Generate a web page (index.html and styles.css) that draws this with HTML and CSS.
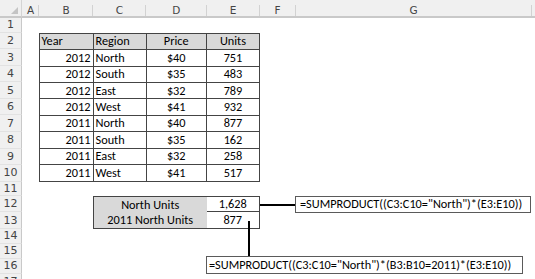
FILE: index.html
```html
<!DOCTYPE html>
<html>
<head>
<meta charset="utf-8">
<link rel="stylesheet" href="styles.css">
</head>
<body>
<div class="sheet">
  <div class="corner"><span class="tri"></span></div>
  <div class="colhdr">A</div>
  <div class="colhdr">B</div>
  <div class="colhdr">C</div>
  <div class="colhdr">D</div>
  <div class="colhdr">E</div>
  <div class="colhdr">F</div>
  <div class="colhdr">G</div>
  <div class="colhdr last"></div>

  <div class="rowhdr r1">1</div>
  <div class="rowhdr r2">2</div>
  <div class="rowhdr r3">3</div>
  <div class="rowhdr r4">4</div>
  <div class="rowhdr r5">5</div>
  <div class="rowhdr r6">6</div>
  <div class="rowhdr r7">7</div>
  <div class="rowhdr r8">8</div>
  <div class="rowhdr r9">9</div>
  <div class="rowhdr r10">10</div>
  <div class="rowhdr r11">11</div>
  <div class="rowhdr r12">12</div>
  <div class="rowhdr r13">13</div>
  <div class="rowhdr r14">14</div>
  <div class="rowhdr r15">15</div>
  <div class="rowhdr r16">16</div>
  <div class="rowhdr r17">17</div>

  <div class="data">
    <div class="c th left">Year</div><div class="c th left">Region</div><div class="c th center">Price</div><div class="c th center">Units</div>
    <div class="c right">2012</div><div class="c left">North</div><div class="c center">$40</div><div class="c center">751</div>
    <div class="c right">2012</div><div class="c left">South</div><div class="c center">$35</div><div class="c center">483</div>
    <div class="c right">2012</div><div class="c left">East</div><div class="c center">$32</div><div class="c center">789</div>
    <div class="c right">2012</div><div class="c left">West</div><div class="c center">$41</div><div class="c center">932</div>
    <div class="c right">2011</div><div class="c left">North</div><div class="c center">$40</div><div class="c center">877</div>
    <div class="c right">2011</div><div class="c left">South</div><div class="c center">$35</div><div class="c center">162</div>
    <div class="c right">2011</div><div class="c left">East</div><div class="c center">$32</div><div class="c center">258</div>
    <div class="c right">2011</div><div class="c left">West</div><div class="c center">$41</div><div class="c center">517</div>
  </div>

  <div class="summary">
    <div class="lbl">North Units</div><div class="val top">1,628</div>
    <div class="lbl">2011 North Units</div><div class="val">877</div>
  </div>

  <div class="hline"></div>
  <div class="vline"></div>
  <div class="fbox fbox-top">=SUMPRODUCT((C3:C10="North")*(E3:E10))</div>
  <div class="fbox fbox-bottom">=SUMPRODUCT((C3:C10="North")*(B3:B10=2011)*(E3:E10))</div>
</div>
</body>
</html>
```
FILE: styles.css
```css
html, body {
  margin: 0;
  padding: 0;
  background: #ffffff;
}
.sheet {
  position: relative;
  width: 535px;
  height: 279px;
  overflow: hidden;
  display: grid;
  grid-template-columns: 22px 17px 54px 53px 60.5px 53px 36px 236px 1fr;
  grid-template-rows: 18px 14.7px repeat(9, 16.56px) 14.3px 16.5px 16.5px 15px 15px 15px 15px;
  font-family: Calibri, Carlito, "Liberation Sans", Arial, sans-serif;
  color: #000;
}
.corner {
  grid-column: 1;
  grid-row: 1;
  background: #f0f0f0;
  border-bottom: 2px solid #c9c9c9;
  border-right: 1px solid #d4d4d4;
  box-sizing: border-box;
  position: relative;
}
.tri {
  position: absolute;
  right: 3px;
  bottom: 2px;
  width: 0;
  height: 0;
  border-left: 7px solid transparent;
  border-bottom: 7px solid #c4c4c4;
}
.colhdr {
  grid-row: 1;
  background: #f0f0f0;
  border-bottom: 2px solid #c9c9c9;
  box-sizing: border-box;
  display: flex;
  align-items: center;
  justify-content: center;
  font-family: "DejaVu Sans", "Liberation Sans", sans-serif;
  font-size: 10.5px;
  color: #444;
  padding-top: 3px;
  position: relative;
}
.colhdr::after {
  content: "";
  position: absolute;
  right: 0;
  top: 5px;
  bottom: 0;
  width: 1px;
  background: #d2d2d2;
}
.colhdr.last::after { display: none; }
.rowhdr {
  grid-column: 1;
  background: #f0f0f0;
  border-right: 1px solid #c9c9c9;
  border-bottom: 1px solid #e2e2e2;
  box-sizing: border-box;
  display: flex;
  align-items: center;
  justify-content: center;
  font-family: "DejaVu Sans", "Liberation Sans", sans-serif;
  font-size: 11px;
  color: #444;
}
.r1 { grid-row: 2; } .r2 { grid-row: 3; } .r3 { grid-row: 4; } .r4 { grid-row: 5; }
.r5 { grid-row: 6; } .r6 { grid-row: 7; } .r7 { grid-row: 8; } .r8 { grid-row: 9; }
.r9 { grid-row: 10; } .r10 { grid-row: 11; } .r11 { grid-row: 12; } .r12 { grid-row: 13; }
.r13 { grid-row: 14; } .r14 { grid-row: 15; } .r15 { grid-row: 16; } .r16 { grid-row: 17; }
.r17 { grid-row: 18; align-items: flex-start; padding-top: 1px; }

.data {
  grid-column: 3 / 7;
  grid-row: 3 / 12;
  display: grid;
  grid-template-columns: 54px 53px 60.5px 53px;
  grid-template-rows: repeat(9, 1fr);
  border-top: 1px solid #444;
  border-left: 1px solid #444;
  margin-left: -0.5px;
  box-sizing: border-box;
  font-size: 12.3px;
}
.c {
  border-right: 1px solid #444;
  border-bottom: 1px solid #444;
  display: flex;
  align-items: center;
  padding: 0 2px;
  white-space: nowrap;
  overflow: hidden;
  line-height: 1;
}
.th { background: #d9d9d9; }
.left { justify-content: flex-start; }
.right { justify-content: flex-end; }
.center { justify-content: center; }

.summary {
  grid-column: 4 / 7;
  grid-row: 13 / 15;
  display: grid;
  grid-template-columns: 113.5px 1fr;
  grid-template-rows: 1fr 1fr;
  border: 1px solid #444;
  margin-left: -0.5px;
  box-sizing: border-box;
  font-size: 12.3px;
}
.lbl {
  background: #d9d9d9;
  display: flex;
  align-items: center;
  justify-content: center;
  white-space: nowrap;
  line-height: 1;
}
.val {
  display: flex;
  align-items: center;
  justify-content: center;
  line-height: 1;
}
.val.top { border-bottom: 1px solid #444; }

.hline {
  position: absolute;
  left: 260px;
  top: 204px;
  width: 35px;
  height: 2px;
  background: #000;
}
.vline {
  position: absolute;
  left: 248px;
  top: 221px;
  width: 2px;
  height: 35px;
  background: #000;
}
.fbox {
  position: absolute;
  background: #fff;
  border: 1px solid #5a5a5a;
  box-sizing: border-box;
  display: flex;
  align-items: center;
  font-size: 12.3px;
  line-height: 1;
  white-space: nowrap;
}
.fbox-top {
  left: 295px;
  top: 196px;
  width: 236px;
  height: 17px;
  padding-left: 4px;
}
.fbox-bottom {
  left: 206px;
  top: 256px;
  width: 317px;
  height: 18px;
  padding-left: 2px;
}
```
